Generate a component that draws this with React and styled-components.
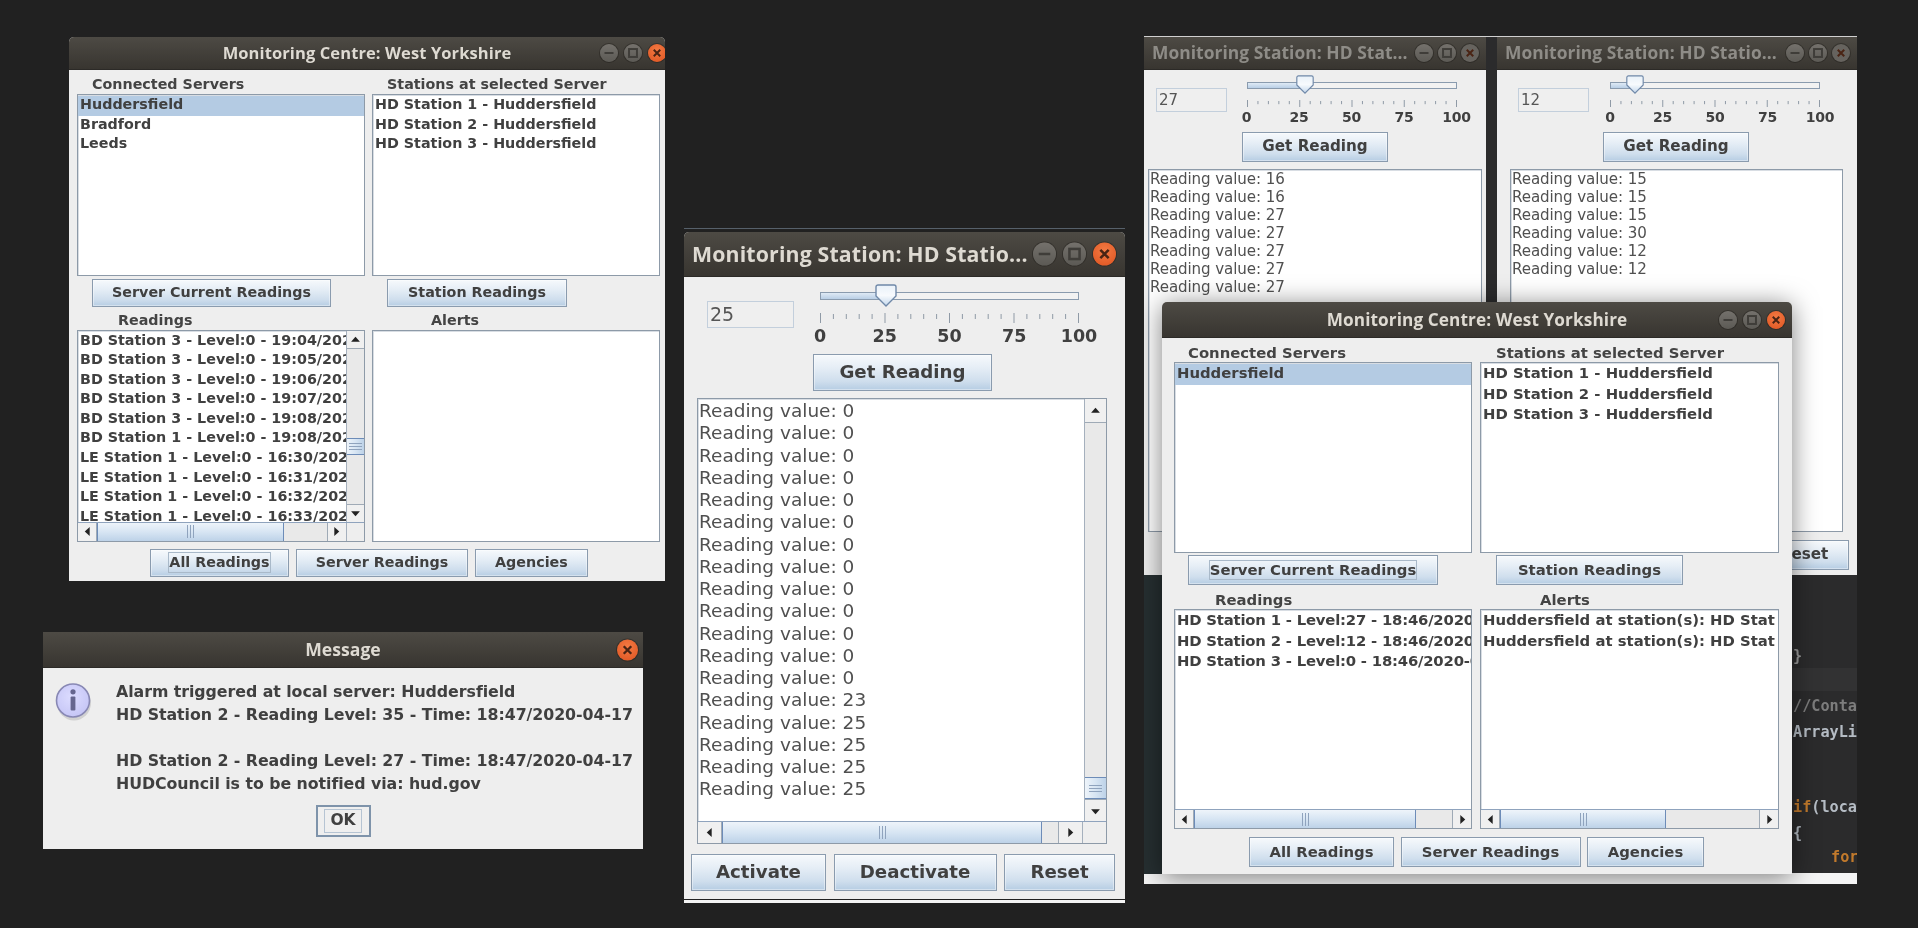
import React from "react";
import styled, { createGlobalStyle } from "styled-components";

const Global = createGlobalStyle`
  html, body { margin: 0; padding: 0; background: #212121; }
  body { font-family: "DejaVu Sans", sans-serif; color: #333; }
`;

const Desk = styled.div`
  position: relative; width: 1918px; height: 928px; overflow: hidden;
  background: #212121; filter: blur(0.45px);
`;
const Shot = styled.div`
  position: absolute; left: ${p => p.$x}px; top: ${p => p.$y}px;
  width: ${p => p.$w}px; height: ${p => p.$h}px; overflow: hidden;
  background: ${p => p.$bg || "#212121"};
  border-top: ${p => p.$line ? `1px solid ${p.$line}` : "none"};
  box-sizing: border-box;
`;
const WhiteBand = styled.div`
  position: absolute; left: 0; right: 0; bottom: 0; height: ${p => p.$h}px; background: #f4f4f4;
`;
const Strip = styled.div`
  position: absolute; left: ${p => p.$x}px; top: ${p => p.$y}px; width: ${p => p.$w}px; height: ${p => p.$h}px;
  background: ${p => p.$c};
`;
const CodeLine = styled.span`
  position: absolute; left: ${p => p.$x}px; top: ${p => p.$y}px;
  font: 600 15.2px/18px "DejaVu Sans Mono", monospace; color: ${p => p.$c}; white-space: pre;
`;
const Keyword = styled.span` color: #c27a2c; `;
const Win = styled.div`
  position: absolute; left: ${p => p.$x}px; top: ${p => p.$y}px;
  width: ${p => p.$w}px; height: ${p => p.$h}px; background: #eeeeee;
  display: flex; flex-direction: column; overflow: hidden;
  border-radius: ${p => p.$round ? "5px 5px 0 0" : "0"};
  box-shadow: ${p => p.$shadow ? "0 3px 26px rgba(0,0,0,.5)" : "none"};
`;
const TitleBar = styled.div`
  position: relative; flex: none; height: ${p => p.$h}px; display: flex; align-items: center;
  background: linear-gradient(#4d4a44, #383530);
  border-bottom: 1px solid #2c2a27; box-sizing: border-box;
  padding-left: ${p => p.$pad || 0}px;
`;
const TitleText = styled.div`
  flex: 1; min-width: 0; white-space: nowrap;
  text-align: ${p => p.$center ? "center" : "left"};
  font: 700 ${p => p.$size}px/1 "Open Sans", sans-serif;
  letter-spacing: ${p => p.$ls || 0}px;
  color: ${p => p.$dim ? "#8e8c87" : "#dedad2"};
`;
const Controls = styled.div`
  position: absolute; right: ${p => p.$right}px; top: 50%; transform: translateY(-50%);
  display: flex; gap: ${p => p.$gap}px; align-items: center;
`;
const Dot = styled.div`
  width: ${p => p.$s}px; height: ${p => p.$s}px; border-radius: 50%;
  display: flex; align-items: center; justify-content: center;
  background: ${p => p.$close
    ? (p.$dim ? "#66635e" : "radial-gradient(circle at 50% 35%, #f47a43, #dd5320)")
    : "linear-gradient(#74716c, #5c5a55)"};
  box-shadow: 0 0 0 1px rgba(30,28,25,.45);
`;
const DotGlyph = ({ kind, s }) => (
  <svg width={s} height={s} viewBox="0 0 10 10" fill="none" stroke={kind === "x" ? "#4a2414" : "#3f3d39"} strokeWidth="1.1">
    {kind === "x" && <path d="M3.2 3.2l3.6 3.6M6.8 3.2l-3.6 3.6" />}
    {kind === "min" && <path d="M2.5 5h5" />}
    {kind === "max" && <rect x="2.8" y="2.8" width="4.4" height="4.4" />}
  </svg>
);
const WinControls = ({ size, gap, right, dim, only }) => (
  <Controls $right={right} $gap={gap}>
    {!only && <Dot $s={size}><DotGlyph kind="min" s={size} /></Dot>}
    {!only && <Dot $s={size}><DotGlyph kind="max" s={size} /></Dot>}
    <Dot $s={size} $close $dim={dim}><DotGlyph kind="x" s={size} /></Dot>
  </Controls>
);

/* shared Java Metal parts */
const Btn = styled.div`
  flex: none; box-sizing: border-box; width: ${p => p.$w}px; height: ${p => p.$h}px;
  margin-left: ${p => p.$ml || 0}px;
  display: flex; align-items: center; justify-content: center; white-space: nowrap;
  border: 1px solid #8a9bae; outline: 1px solid rgba(255,255,255,.4); outline-offset: -2px;
  background: linear-gradient(#f6f9fc 0%, #e6eef6 35%, #cfdeed 75%, #b6cde3 100%);
  font: 700 ${p => p.$fs}px/1 "DejaVu Sans", sans-serif; color: #404040;
  letter-spacing: ${p => p.$ls || 0}px;
`;
const Focus = styled.span`
  padding: 2px ${p => p.$px || 0}px; border: 1px solid #a9b9c9;
`;
const Caption = styled.div`
  box-sizing: border-box; height: ${p => p.$h}px; padding: ${p => p.$pt}px 0 0 ${p => p.$ml}px; display: flex; align-items: center;
  font: 700 ${p => p.$fs}px/1 "DejaVu Sans", sans-serif; color: #444; white-space: nowrap;
  letter-spacing: ${p => p.$ls || 0}px;
`;
const ScrollFrame = styled.div`
  box-sizing: border-box; width: ${p => p.$w ? p.$w + "px" : "auto"}; height: ${p => p.$h}px;
  margin-left: ${p => p.$ml || 0}px;
  display: flex; flex-direction: column; background: #fff;
  border: 1px solid #8d9aa8; box-shadow: inset 1px 1px 0 #d8dde3;
`;
const ScrollMain = styled.div` flex: 1; min-height: 0; display: flex; `;
const Rows = styled.div`
  flex: 1; min-width: 0; overflow: hidden; padding-top: ${p => p.$pt || 0}px;
`;
const Row = styled.div`
  height: ${p => p.$h}px; line-height: ${p => p.$lh}px; padding-left: ${p => p.$pl}px;
  white-space: nowrap; overflow: hidden;
  background: ${p => p.$sel ? "#b4cbe3" : "transparent"};
  font-family: "DejaVu Sans", sans-serif; font-size: ${p => p.$fs}px;
  font-weight: ${p => p.$plain ? 400 : 700}; letter-spacing: ${p => p.$ls || 0}px;
  color: ${p => p.$plain ? "#505050" : "#404040"};
`;
const VBar = styled.div`
  flex: none; width: ${p => p.$w}px; display: flex; flex-direction: column;
  background: #eeeeee; border-left: 1px solid #a5b0bd; box-sizing: border-box;
`;
const HBarWrap = styled.div`
  flex: none; height: ${p => p.$h}px; display: flex; background: #eeeeee;
  border-top: 1px solid #8fa3bd; box-sizing: border-box;
`;
const ArrowBtn = styled.div`
  flex: none; display: flex; align-items: center; justify-content: center; box-sizing: border-box;
  width: ${p => p.$w ? p.$w + "px" : "auto"}; height: ${p => p.$h ? p.$h + "px" : "auto"};
  background: #f0f0f0;
  border-${p => p.$edge}: 1px solid #9faab6;
`;
const Rest = styled.div` flex: 1; background: #e9e9e9; min-width: 0; min-height: 0; `;
const SpacerV = styled.div` flex: none; height: ${p => p.$h}px; background: #e9e9e9; `;
const ThumbH = styled.div`
  flex: none; width: ${p => p.$w}px; box-sizing: border-box; display: flex; align-items: center; justify-content: center;
  background: linear-gradient(#eef4fa, #d7e5f3 50%, #bdd2e8);
  border-left: 1px solid #6d8cb8; border-right: 1px solid #6d8cb8;
`;
const ThumbV = styled.div`
  flex: none; height: ${p => p.$h}px; box-sizing: border-box; display: flex; align-items: center; justify-content: center;
  background: linear-gradient(90deg, #eef4fa, #d7e5f3 50%, #bdd2e8);
  border-top: 1px solid #6d8cb8; border-bottom: 1px solid #6d8cb8;
`;
const Corner = styled.div` flex: none; width: ${p => p.$w}px; border-left: 1px solid #a5b0bd; box-sizing: border-box; `;

const Tri = ({ dir, s = 11 }) => {
  const d = { up: "M1 7L5 2.5L9 7Z", down: "M1 3L5 7.5L9 3Z", left: "M7 1L2.5 5L7 9Z", right: "M3 1L7.5 5L3 9Z" }[dir];
  return <svg width={s} height={s} viewBox="0 0 10 10"><path d={d} fill="#222" /></svg>;
};
const GripV = () => (
  <svg width="7" height="13" viewBox="0 0 7 13" stroke="#8fa3bd" strokeWidth="1"><path d="M.5 0v13M3.5 0v13M6.5 0v13" /></svg>
);
const GripH = () => (
  <svg width="13" height="7" viewBox="0 0 13 7" stroke="#8fa3bd" strokeWidth="1"><path d="M0 .5h13M0 3.5h13M0 6.5h13" /></svg>
);

const ScrollBox = ({ w, h, ml, rows, sel, rowH, fs, ls, pl = 2, pt = 0, plain, v, hb }) => (
  <ScrollFrame $w={w} $h={h} $ml={ml}>
    <ScrollMain>
      <Rows $pt={pt}>
        {rows.map((r, i) => (
          <Row key={i} $h={rowH} $lh={plain ? rowH : rowH - 2} $fs={fs} $ls={ls} $pl={pl} $plain={plain} $sel={sel === i}>{r}</Row>
        ))}
      </Rows>
      {v && (
        <VBar $w={v.w}>
          <ArrowBtn $h={v.btn} $edge="bottom"><Tri dir="up" /></ArrowBtn>
          <SpacerV $h={v.before} />
          <ThumbV $h={v.thumb}><GripH /></ThumbV>
          <Rest />
          <ArrowBtn $h={v.btn} $edge="top"><Tri dir="down" /></ArrowBtn>
        </VBar>
      )}
    </ScrollMain>
    {hb && (
      <HBarWrap $h={hb.h}>
        <ArrowBtn $w={hb.btn} $edge="right"><Tri dir="left" /></ArrowBtn>
        <ThumbH $w={hb.thumb}><GripV /></ThumbH>
        <Rest />
        <ArrowBtn $w={hb.btn} $edge="left"><Tri dir="right" /></ArrowBtn>
        {hb.corner > 0 && <Corner $w={hb.corner} />}
      </HBarWrap>
    )}
  </ScrollFrame>
);

/* Centre window */
const CentreBody = styled.div`
  flex: 1; display: grid; padding-left: ${p => p.$pl}px;
  grid-template-columns: ${p => p.$c1}px ${p => p.$c2}px; column-gap: ${p => p.$gap}px;
  grid-template-rows: ${p => p.$rows}; align-content: start;
`;
const FootRow = styled.div`
  grid-column: 1 / 3; display: flex; gap: ${p => p.$gap}px; padding-left: ${p => p.$pl}px;
  margin-top: ${p => p.$mt}px;
`;
const ButtonCell = styled.div` margin-top: ${p => p.$mt}px; display: flex; `;

const CentreWindow = ({ x, y, w, h, m, servers, readings, alerts, readingsBar, alertsBar, readingsV, focusAll, focusServer, shadow }) => (
  <Win $x={x} $y={y} $w={w} $h={h} $round $shadow={shadow}>
    <TitleBar $h={m.titleH}>
      <TitleText $center $size={m.titleFs} $ls={m.titleLs}>Monitoring Centre: West Yorkshire</TitleText>
      <WinControls size={m.dot} gap={m.dotGap} right={m.dotRight} />
    </TitleBar>
    <CentreBody $pl={m.pl} $c1={m.c1} $c2={m.c2} $gap={m.gap} $rows={m.rows}>
      <Caption $h={m.capH} $pt={m.capPt} $ml={m.capML[0]} $fs={m.fs} $ls={m.ls}>Connected Servers</Caption>
      <Caption $h={m.capH} $pt={m.capPt} $ml={m.capML[1]} $fs={m.fs} $ls={m.ls}>Stations at selected Server</Caption>
      <ScrollBox h={m.list1} rows={servers} sel={0} rowH={m.rowH} fs={m.fs} ls={m.ls} pt={1} />
      <ScrollBox h={m.list1}
        rows={["HD Station 1 - Huddersfield", "HD Station 2 - Huddersfield", "HD Station 3 - Huddersfield"]}
        rowH={m.rowH} fs={m.fs} ls={m.ls} pt={1} />
      <ButtonCell $mt={m.btnMt}>
        <Btn $w={m.b1} $h={m.btnH} $ml={m.capML[0]} $fs={m.fs} $ls={m.ls}>
          {focusServer ? <Focus>Server Current Readings</Focus> : "Server Current Readings"}
        </Btn>
      </ButtonCell>
      <ButtonCell $mt={m.btnMt}>
        <Btn $w={m.b2} $h={m.btnH} $ml={m.capML[1]} $fs={m.fs} $ls={m.ls}>Station Readings</Btn>
      </ButtonCell>
      <Caption $h={m.capH2} $pt={m.capPt} $ml={m.capML[2]} $fs={m.fs} $ls={m.ls}>Readings</Caption>
      <Caption $h={m.capH2} $pt={m.capPt} $ml={m.capML[3]} $fs={m.fs} $ls={m.ls}>Alerts</Caption>
      <ScrollBox h={m.list2} rows={readings} rowH={m.rowH} fs={m.fs} ls={m.readLs} pt={1} v={readingsV} hb={readingsBar} />
      <ScrollBox h={m.list2} rows={alerts} rowH={m.rowH} fs={m.fs} ls={m.ls} pt={1} hb={alertsBar} />
      <FootRow $gap={m.footGap} $pl={m.footPl} $mt={m.footMt}>
        <Btn $w={m.foot[0]} $h={m.btnH} $fs={m.fs} $ls={m.ls}>
          {focusAll ? <Focus>All Readings</Focus> : "All Readings"}
        </Btn>
        <Btn $w={m.foot[1]} $h={m.btnH} $fs={m.fs} $ls={m.ls}>Server Readings</Btn>
        <Btn $w={m.foot[2]} $h={m.btnH} $fs={m.fs} $ls={m.ls}>Agencies</Btn>
      </FootRow>
    </CentreBody>
  </Win>
);

/* Station window */
const StationBody = styled.div` flex: 1; display: flex; flex-direction: column; min-height: 0; `;
const TopRow = styled.div`
  flex: none; height: ${p => p.$h}px; display: flex; align-items: flex-start; padding-left: ${p => p.$pl}px;
`;
const ValueField = styled.div`
  flex: none; box-sizing: border-box; width: ${p => p.$w}px; height: ${p => p.$h}px; margin-top: ${p => p.$mt}px;
  border: 1px solid #c3cfdc; background: #efefef; display: flex; align-items: center; padding-left: 2px;
  font: 400 ${p => p.$fs}px/1 "DejaVu Sans", sans-serif; color: #555;
`;
const SliderCol = styled.div` flex: none; width: ${p => p.$w}px; margin-left: ${p => p.$ml}px; `;
const TrackArea = styled.div` position: relative; height: ${p => p.$h}px; `;
const Track = styled.div`
  position: absolute; left: 0; right: 0; top: ${p => p.$top}px; height: ${p => p.$h}px; box-sizing: border-box;
  border: 1px solid #8a9bae; background: #f2f2f2; display: flex;
`;
const TrackFill = styled.div` background: linear-gradient(#dfeaf5, #b9cfe6); `;
const SliderThumb = styled.svg`
  position: absolute; top: ${p => p.$top}px; transform: translateX(-50%);
`;
const TickSvg = styled.svg` display: block; `;
const LabelRow = styled.div`
  height: ${p => p.$h}px; display: flex; justify-content: space-between; align-items: center;
`;
const TickLabel = styled.span`
  width: 0; display: flex; justify-content: center; white-space: nowrap;
  font: 700 ${p => p.$fs}px/1 "DejaVu Sans", sans-serif; color: #404040; letter-spacing: ${p => p.$ls || 0}px;
`;
const Ticks = ({ w, h }) => (
  <TickSvg width={w} height={h} viewBox={`0 0 ${w} ${h}`} stroke="#8f9aa6" strokeWidth="1">
    {Array.from({ length: 21 }, (_, i) => {
      const x = 0.5 + (i * (w - 1)) / 20;
      return <path key={i} d={`M${x} ${i % 5 === 0 ? 0 : 1}V${i % 5 === 0 ? h : h * 0.6}`} />;
    })}
  </TickSvg>
);
const Slider = ({ value, pct, m }) => (
  <SliderCol $w={m.sw} $ml={m.sml}>
    <TrackArea $h={m.areaH}>
      <Track $top={m.trackTop} $h={m.trackH}>
        <TrackFill style={{ width: `${pct}%` }} />
      </Track>
      <SliderThumb $top={m.thumbTop} width={m.thumbW} height={m.thumbH} viewBox="0 0 22 23" style={{ left: `${pct}%` }}>
        <defs>
          <linearGradient id={`th${value}`} x1="0" y1="0" x2="0" y2="1">
            <stop offset="0" stopColor="#e9f1f9" /><stop offset=".5" stopColor="#f7fafd" /><stop offset="1" stopColor="#c3d7ec" />
          </linearGradient>
        </defs>
        <path d="M3 1h16a2 2 0 0 1 2 2v9L11 22 1 12V3a2 2 0 0 1 2-2Z" fill={`url(#th${value})`} stroke="#6f88a8" strokeWidth="1.4" />
      </SliderThumb>
    </TrackArea>
    <Ticks w={m.sw} h={m.tickH} />
    <LabelRow $h={m.labelH}>
      {[0, 25, 50, 75, 100].map(n => <TickLabel key={n} $fs={m.labelFs} $ls={m.labelLs}>{n}</TickLabel>)}
    </LabelRow>
  </SliderCol>
);
const BtnRow = styled.div`
  flex: none; display: flex; justify-content: flex-end; gap: ${p => p.$gap}px;
  padding-right: ${p => p.$pr}px; margin-top: ${p => p.$mt}px;
`;
const AreaGap = styled.div` flex: none; height: ${p => p.$h}px; `;

const StationWindow = ({ x, y, w, h, title, value, pct, readings, m, dim, v, hb, buttons }) => (
  <Win $x={x} $y={y} $w={w} $h={h} $round={m.round}>
    <TitleBar $h={m.titleH} $pad={m.titlePad}>
      <TitleText $size={m.titleFs} $dim={dim} $ls={m.titleLs}>{title}</TitleText>
      <WinControls size={m.dot} gap={m.dotGap} right={m.dotRight} dim={dim} />
    </TitleBar>
    <StationBody>
      <TopRow $h={m.topH} $pl={m.fieldL}>
        <ValueField $w={m.fieldW} $h={m.fieldH} $mt={m.fieldT} $fs={m.fieldFs}>{value}</ValueField>
        <Slider value={value} pct={pct} m={m} />
      </TopRow>
      <Btn $w={m.getW} $h={m.getH} $ml={m.getL} $fs={m.btnFs} $ls={m.btnLs}>Get Reading</Btn>
      <AreaGap $h={m.areaGap} />
      <ScrollBox w={m.areaW} h={m.areaHt} ml={m.areaL} rows={readings} rowH={m.rowH} fs={m.rowFs} ls={m.rowLs} pl={1} pt={m.rowPt} plain v={v} hb={hb} />
      {buttons && (
        <BtnRow $gap={m.rowGap} $pr={m.rowPr} $mt={m.rowMt}>
          {buttons.map(b => <Btn key={b[0]} $w={b[1]} $h={m.getH} $fs={m.btnFs} $ls={m.btnLs}>{b[0]}</Btn>)}
        </BtnRow>
      )}
    </StationBody>
  </Win>
);

/* Message */
const MsgBody = styled.div` flex: 1; display: flex; flex-direction: column; `;
const MsgMain = styled.div` display: flex; padding: 12px 0 0 12px; `;
const MsgText = styled.div`
  margin-left: 23px; font: 700 15.8px/23px "DejaVu Sans", sans-serif; color: #404040; white-space: pre; letter-spacing: -0.05px;
`;
const OkRow = styled.div` display: flex; justify-content: center; margin-top: 10px; `;
const OkBtn = styled.div`
  box-sizing: border-box; width: 55px; height: 32px; display: flex; align-items: center; justify-content: center;
  border: 2px solid #7e93aa; background: #efefef; font: 700 15.5px/1 "DejaVu Sans", sans-serif; color: #404040;
`;
const OkFocus = styled.span` padding: 3px 5px; border: 1px solid #b6c4d3; `;
const InfoSvg = styled.svg` flex: none; margin-top: 2px; `;
const InfoIcon = () => (
  <InfoSvg width="38" height="40" viewBox="0 0 38 40">
    <defs>
      <radialGradient id="infoFill" cx=".45" cy=".4" r=".7">
        <stop offset="0" stopColor="#dcdcff" /><stop offset="1" stopColor="#c2c2f4" />
      </radialGradient>
    </defs>
    <ellipse cx="19" cy="21" rx="17" ry="17.5" fill="#000" opacity=".12" />
    <circle cx="18" cy="18.5" r="16.5" fill="url(#infoFill)" stroke="#8888b4" strokeWidth="1.6" />
    <circle cx="18" cy="9.8" r="2.6" fill="#66668f" />
    <rect x="15.6" y="14.5" width="4.8" height="14" rx="1" fill="#66668f" />
  </InfoSvg>
);

/* data */
const centreBig = {
  titleH: 33, titleFs: 16.5, titleLs: 0.1, dot: 18, dotGap: 6, dotRight: -1,
  pl: 8, c1: 287.5, c2: 287.5, gap: 7.5,
  rows: "24px 182px 30.5px 23px 212px auto", capH: 24, capH2: 23, capPt: 5, capML: [15, 15, 41, 59],
  list1: 182, list2: 212, fs: 14.3, ls: 0, readLs: 0, rowH: 19.6, btnMt: 2.5, btnH: 28,
  b1: 239, b2: 180, footGap: 6.7, footPl: 73, footMt: 7, foot: [139, 172.5, 113],
};
const centreFront = {
  titleH: 36, titleFs: 17.2, titleLs: 0.1, dot: 18, dotGap: 6, dotRight: 7,
  pl: 12, c1: 298, c2: 299, gap: 8,
  rows: "24px 191px 32px 24px 220px auto", capH: 24, capH2: 24, capPt: 6, capML: [14, 16, 41, 60],
  list1: 191, list2: 220, fs: 14.85, ls: 0, readLs: -0.2, rowH: 20.5, btnMt: 2, btnH: 30,
  b1: 250, b2: 187, footGap: 6.5, footPl: 75, footMt: 8, foot: [145, 180, 117],
};
const stationBig = {
  round: true, titleH: 45, titleFs: 21.3, titleLs: 0.15, titlePad: 8, dot: 23, dotGap: 7, dotRight: 9,
  topH: 77, fieldL: 23, fieldW: 87, fieldH: 27, fieldT: 24, fieldFs: 19,
  sw: 259, sml: 26, areaH: 36, trackTop: 15, trackH: 8, thumbTop: 7, thumbW: 22, thumbH: 23,
  tickH: 10, labelH: 28, labelFs: 17.5, labelLs: 0,
  getW: 179, getH: 37, getL: 129, btnFs: 18.2, btnLs: 0, areaGap: 7,
  areaW: 410, areaHt: 446, areaL: 13, rowH: 22.25, rowFs: 18.5, rowLs: 0, rowPt: 1,
  rowGap: 7.5, rowPr: 10, rowMt: 10,
};
const stationSmall = {
  titleH: 33, titleFs: 17.4, titleLs: 0.05, titlePad: 8, dot: 18, dotGap: 5, dotRight: 7,
  topH: 62, fieldH: 24, fieldT: 18, fieldFs: 15, sw: 210, areaH: 30, trackTop: 12, trackH: 7, thumbTop: 5,
  thumbW: 18, thumbH: 19, tickH: 7, labelH: 20, labelFs: 14, labelLs: -0.2,
  getW: 146, getH: 30, btnFs: 15.2, btnLs: 0, areaGap: 7, areaHt: 363, rowH: 18, rowFs: 15.1, rowLs: -0.1, rowPt: 0,
  rowGap: 7, rowPr: 8, rowMt: 7.5,
};

const r = n => `Reading value: ${n}`;
const bigReadings = [...Array(13).fill(0), 23, 25, 25, 25, 25].map(r);
const w1Readings = [
  "BD Station 3 - Level:0 - 19:04/2020", "BD Station 3 - Level:0 - 19:05/2020",
  "BD Station 3 - Level:0 - 19:06/2020", "BD Station 3 - Level:0 - 19:07/2020",
  "BD Station 3 - Level:0 - 19:08/2020", "BD Station 1 - Level:0 - 19:08/2020",
  "LE Station 1 - Level:0 - 16:30/2020", "LE Station 1 - Level:0 - 16:31/2020",
  "LE Station 1 - Level:0 - 16:32/2020", "LE Station 1 - Level:0 - 16:33/2020",
];

export default function App() {
  return (
    <>
      <Global />
      <Desk>
        <CentreWindow x={69} y={37} w={596} h={544} m={centreBig}
          servers={["Huddersfield", "Bradford", "Leeds"]} readings={w1Readings} alerts={[]}
          readingsV={{ w: 18, btn: 18, before: 89, thumb: 17 }}
          readingsBar={{ h: 19, btn: 19, thumb: 187, corner: 18 }} focusAll />

        <Win $x={43} $y={632} $w={600} $h={217}>
          <TitleBar $h={36}>
            <TitleText $center $size={17.6}>Message</TitleText>
            <WinControls size={21} gap={0} right={5} only />
          </TitleBar>
          <MsgBody>
            <MsgMain>
              <InfoIcon />
              <MsgText>{"Alarm triggered at local server: Huddersfield\nHD Station 2 - Reading Level: 35 - Time: 18:47/2020-04-17\n \nHD Station 2 - Reading Level: 27 - Time: 18:47/2020-04-17\nHUDCouncil is to be notified via: hud.gov"}</MsgText>
            </MsgMain>
            <OkRow><OkBtn><OkFocus>OK</OkFocus></OkBtn></OkRow>
          </MsgBody>
        </Win>

        <Shot $x={684} $y={228} $w={441} $h={675} $line="#56606a">
          <WhiteBand $h={3} />
          <StationWindow x={0} y={3} w={441} h={667} m={stationBig}
            title="Monitoring Station: HD Statio..." value={25} pct={25.5} readings={bigReadings}
            v={{ w: 22, btn: 24, before: 354, thumb: 22 }}
            hb={{ h: 22, btn: 24, thumb: 320, corner: 24 }}
            buttons={[["Activate", 135], ["Deactivate", 163], ["Reset", 111]]} />
        </Shot>

        <Shot $x={1144} $y={36} $w={713} $h={848} $bg="#2b2b2c" $line="#d0d0d0">
          <WhiteBand $h={11} />
          <Strip $x={0} $y={538} $w={18} $h={299} $c="#262f31" />
          <Strip $x={648} $y={631} $w={65} $h={23} $c="#323233" />
          <CodeLine $x={649} $y={610} $c="#9a9a9a">{"}"}</CodeLine>
          <CodeLine $x={649} $y={660} $c="#7d7d7d">{"//Conta"}</CodeLine>
          <CodeLine $x={649} $y={686} $c="#b5bcc4">{"ArrayLi"}</CodeLine>
          <CodeLine $x={649} $y={761} $c="#b5bcc4"><Keyword>if</Keyword>{"(loca"}</CodeLine>
          <CodeLine $x={649} $y={787} $c="#b5bcc4">{"{"}</CodeLine>
          <CodeLine $x={687} $y={811} $c="#c27a2c">{"for"}</CodeLine>

          <StationWindow x={0} y={0} w={342} h={538} dim
            m={{ ...stationSmall, fieldL: 12, fieldW: 71, sml: 19.6, getL: 98, areaW: 334, areaL: 4 }}
            title="Monitoring Station: HD Stat..." value={27} pct={28}
            readings={[16, 16, 27, 27, 27, 27, 27].map(r)} />
          <StationWindow x={353} y={0} w={360} h={538} dim
            m={{ ...stationSmall, fieldL: 21, fieldW: 71, sml: 21, getL: 106, areaW: 333, areaL: 13 }}
            title="Monitoring Station: HD Statio..." value={12} pct={12}
            readings={[15, 15, 15, 30, 12, 12].map(r)}
            buttons={[["Reset", 90]]} />

          <CentreWindow x={18} y={265} w={630} h={572} m={centreFront} shadow
            servers={["Huddersfield"]}
            readings={["HD Station 1 - Level:27 - 18:46/2020", "HD Station 2 - Level:12 - 18:46/2020", "HD Station 3 - Level:0 - 18:46/2020-0"]}
            alerts={["Huddersfield at station(s): HD Stat", "Huddersfield at station(s): HD Stat"]}
            readingsBar={{ h: 19, btn: 19, thumb: 222, corner: 0 }}
            alertsBar={{ h: 19, btn: 19, thumb: 166, corner: 0 }} focusServer />
        </Shot>
      </Desk>
    </>
  );
}
